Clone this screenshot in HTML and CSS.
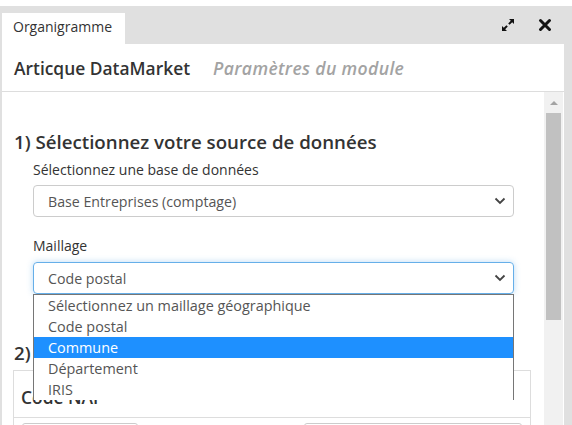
FILE: index.html
```html
<!DOCTYPE html>
<html lang="fr">
<head>
    <meta charset="UTF-8">
    <title>Organigramme</title>
    <link rel="stylesheet" href="styles.css">
</head>
<body>
    <div class="window">
        <div class="tabbar">
            <div class="tab">Organigramme</div>
            <div class="tab-tools">
                <svg class="tool" width="16" height="16" viewBox="0 0 16 16">
                    <path d="M9 2h5v5l-1.8-1.8-2.6 2.6-1.4-1.4 2.6-2.6z M7 14H2V9l1.8 1.8 2.6-2.6 1.4 1.4-2.6 2.6z" fill="#111"/>
                </svg>
                <svg class="tool" width="14" height="14" viewBox="0 0 14 14">
                    <path d="M2.5 2.5l9 9M11.5 2.5l-9 9" stroke="#111" stroke-width="3" stroke-linecap="round"/>
                </svg>
            </div>
        </div>

        <div class="panel">
            <div class="panel-header">
                <span class="title">Articque DataMarket</span>
                <span class="subtitle">Paramètres du module</span>
            </div>

            <div class="panel-body">
                <div class="content">
                    <h2>1) Sélectionnez votre source de données</h2>
                    <div class="field">
                        <label>Sélectionnez une base de données</label>
                        <div class="select">
                            <span>Base Entreprises (comptage)</span>
                            <svg class="chevron" width="12" height="8" viewBox="0 0 12 8"><path d="M1.5 1.5l4.5 4.5 4.5-4.5" fill="none" stroke="#444" stroke-width="1.8"/></svg>
                        </div>
                    </div>
                    <div class="field maillage">
                        <label>Maillage</label>
                        <div class="select focused">
                            <span>Code postal</span>
                            <svg class="chevron" width="12" height="8" viewBox="0 0 12 8"><path d="M1.5 1.5l4.5 4.5 4.5-4.5" fill="none" stroke="#444" stroke-width="1.8"/></svg>
                        </div>
                        <ul class="options">
                            <li>Sélectionnez un maillage géographique</li>
                            <li>Code postal</li>
                            <li class="active">Commune</li>
                            <li>Département</li>
                            <li>IRIS</li>
                        </ul>
                    </div>

                    <h2 class="step2">2)</h2>
                    <div class="card">
                        <div class="card-header">Code NAF</div>
                        <div class="card-body">
                            <div class="box small"></div>
                            <div class="box large"></div>
                        </div>
                    </div>
                </div>
                <div class="scrollbar">
                    <div class="arrow-up"></div>
                    <div class="thumb"></div>
                </div>
            </div>
        </div>
    </div>
</body>
</html>
```

FILE: styles.css
```css
body, html {
    margin: 0;
    padding: 0;
    height: 100%;
    overflow: hidden;
    font-family: "Open Sans", "Noto Sans", sans-serif;
    color: #333;
    background-color: #fff;
}
.window {
    padding-top: 6px;
    height: 100%;
    box-sizing: border-box;
    display: flex;
    flex-direction: column;
}
.tabbar {
    height: 38px;
    background-color: #e0e0e0;
    display: flex;
    align-items: flex-end;
    justify-content: space-between;
    padding-left: 2px;
    flex-shrink: 0;
}
.tab {
    background-color: #fff;
    height: 31px;
    box-sizing: border-box;
    padding: 4px 0 0 11px;
    width: 123px;
    font-size: 14px;
    color: #333;
}
.tab-tools {
    display: flex;
    align-items: center;
    gap: 22px;
    height: 38px;
    padding-right: 20px;
    align-self: flex-start;
}
.panel {
    flex: 1;
    background-color: #fff;
    border-left: 2px solid #e0e0e0;
    border-right: 8px solid #e0e0e0;
    display: flex;
    flex-direction: column;
    min-height: 0;
}
.panel-header {
    height: 47px;
    border-bottom: 1px solid #ddd;
    display: flex;
    align-items: center;
    padding-left: 12px;
    gap: 23px;
    flex-shrink: 0;
}
.title {
    font-size: 17.4px;
    font-weight: 600;
    color: #333;
}
.subtitle {
    font-size: 17.6px;
    font-weight: 600;
    font-style: italic;
    color: #a3a3a3;
    letter-spacing: 0.35px;
}
.panel-body {
    flex: 1;
    display: flex;
    min-height: 0;
    overflow: hidden;
}
.content {
    flex: 1;
    padding: 0 12px;
    position: relative;
    overflow: hidden;
}
h2 {
    font-size: 18.7px;
    font-weight: 600;
    margin: 36px 0 0;
    line-height: 28px;
    color: #333;
}
.field {
    margin: 4px 18px 0 19px;
    position: relative;
}
.field label {
    display: block;
    font-size: 14px;
    line-height: 20px;
    margin-bottom: 5px;
}
.maillage {
    margin-top: 19px;
}
.maillage label {
    margin-bottom: 6px;
}
.select {
    height: 32px;
    box-sizing: border-box;
    border: 1px solid #ccc;
    border-radius: 4px;
    display: flex;
    align-items: center;
    justify-content: space-between;
    padding: 0 7px 0 14px;
    font-size: 14.2px;
    color: #555;
}
.select.focused {
    border-color: #66afe9;
    box-shadow: 0 0 6px rgba(102, 175, 233, 0.45);
}
.options {
    position: absolute;
    top: 100%;
    left: 0;
    right: 0;
    margin: 0;
    padding: 0;
    list-style: none;
    background-color: #fff;
    border: 1px solid #767676;
    border-bottom: none;
    font-size: 14.4px;
    color: #555;
    z-index: 2;
}
.options li {
    height: 21px;
    line-height: 21px;
    padding-left: 14px;
}
.options li.active {
    background-color: #1e90ff;
    color: #fff;
}
.step2 {
    margin-top: 45px;
}
.card {
    margin-top: 3px;
    border: 1px solid #ddd;
    border-bottom: none;
    width: 518px;
    margin-left: -1px;
    box-sizing: border-box;
}
.card-header {
    height: 47px;
    box-sizing: border-box;
    border-bottom: 1px solid #ddd;
    font-size: 17.4px;
    font-weight: 600;
    padding: 14px 0 0 7px;
}
.card-body {
    display: flex;
    justify-content: space-between;
    padding: 5px 8px 0 8px;
}
.box {
    height: 30px;
    border: 1px solid #ccc;
    border-radius: 3px;
}
.box.small {
    width: 114px;
}
.box.large {
    width: 216px;
}
.scrollbar {
    width: 19px;
    background-color: #f1f1f1;
    margin-right: 1px;
    display: flex;
    flex-direction: column;
    align-items: center;
}
.arrow-up {
    margin-top: 9px;
    width: 0;
    height: 0;
    border-left: 4px solid transparent;
    border-right: 4px solid transparent;
    border-bottom: 4px solid #a3a3a3;
}
.thumb {
    margin-top: 8px;
    width: 15px;
    height: 207px;
    background-color: #c1c1c1;
}
```
